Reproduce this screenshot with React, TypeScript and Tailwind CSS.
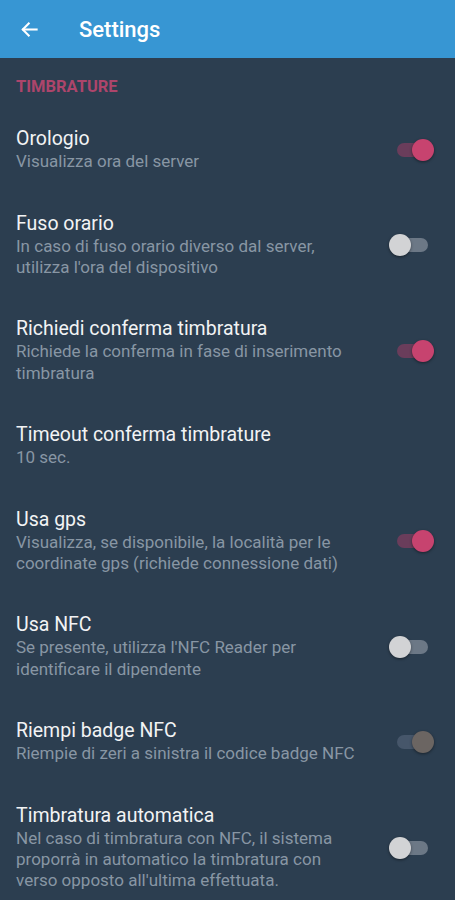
import React from 'react';

type Pref = {
  title: string;
  summary: string[];
  toggle?: 'on' | 'off' | 'disabled';
};

const prefs: Pref[] = [
  { title: 'Orologio', summary: ['Visualizza ora del server'], toggle: 'on' },
  { title: 'Fuso orario', summary: ['In caso di fuso orario diverso dal server,', "utilizza l'ora del dispositivo"], toggle: 'off' },
  { title: 'Richiedi conferma timbratura', summary: ['Richiede la conferma in fase di inserimento', 'timbratura'], toggle: 'on' },
  { title: 'Timeout conferma timbrature', summary: ['10 sec.'] },
  { title: 'Usa gps', summary: ['Visualizza, se disponibile, la località per le', 'coordinate gps (richiede connessione dati)'], toggle: 'on' },
  { title: 'Usa NFC', summary: ["Se presente, utilizza l'NFC Reader per", 'identificare il dipendente'], toggle: 'off' },
  { title: 'Riempi badge NFC', summary: ['Riempie di zeri a sinistra il codice badge NFC'], toggle: 'disabled' },
  { title: 'Timbratura automatica', summary: ['Nel caso di timbratura con NFC, il sistema', 'proporrà in automatico la timbratura con', "verso opposto all'ultima effettuata."], toggle: 'off' },
];

function Toggle({ state }: { state: 'on' | 'off' | 'disabled' }) {
  const on = state !== 'off';
  return (
    <div className="relative w-[45px] h-[24px] shrink-0">
      <div
        className={`absolute left-[8px] top-[5px] w-[31px] h-[14px] rounded-full ${
          state === 'on' ? 'bg-[#6a3d5b]' : state === 'disabled' ? 'bg-[#46566a]' : 'bg-[#6c7886]'
        }`}
      />
      <div
        className={`absolute top-[1px] w-[22px] h-[22px] rounded-full shadow-[0_1px_3px_rgba(0,0,0,0.45)] ${
          on ? 'left-[23px]' : 'left-0'
        } ${state === 'on' ? 'bg-[#c7436f]' : state === 'disabled' ? 'bg-[#6b6562]' : 'bg-[#d2d3d5]'}`}
      />
    </div>
  );
}

export default function App() {
  return (
    <div className="w-[455px] h-[900px] overflow-hidden bg-[#2c3e50] font-['Roboto',sans-serif]">
      <div className="h-[58px] bg-[#3796d3] flex items-center">
        <svg className="ml-[20px]" width="19" height="19" viewBox="0 0 24 24" fill="none" stroke="#ffffff" strokeWidth="2.6" strokeLinecap="square">
          <path d="M21 12H4" />
          <path d="M11 4.5L3.5 12L11 19.5" />
        </svg>
        <span className="ml-[40px] text-white text-[22px] font-medium">Settings</span>
      </div>

      <div className="pt-[19px] pb-[10.5px] px-[16px] text-[16.5px] leading-[20px] font-bold text-[#ad456b]">
        TIMBRATURE
      </div>

      {prefs.map((p) => (
        <div key={p.title} className="flex items-center pl-[16px] pr-[21px] py-[19.6px]">
          <div className="flex-1">
            <div className="text-[19.5px] leading-[24px] text-[#f2f3f4]">{p.title}</div>
            {p.summary.map((line) => (
              <div key={line} className="text-[17px] leading-[21.3px] text-[#8896a4] whitespace-nowrap">
                {line}
              </div>
            ))}
          </div>
          {p.toggle && <Toggle state={p.toggle} />}
        </div>
      ))}
    </div>
  );
}
